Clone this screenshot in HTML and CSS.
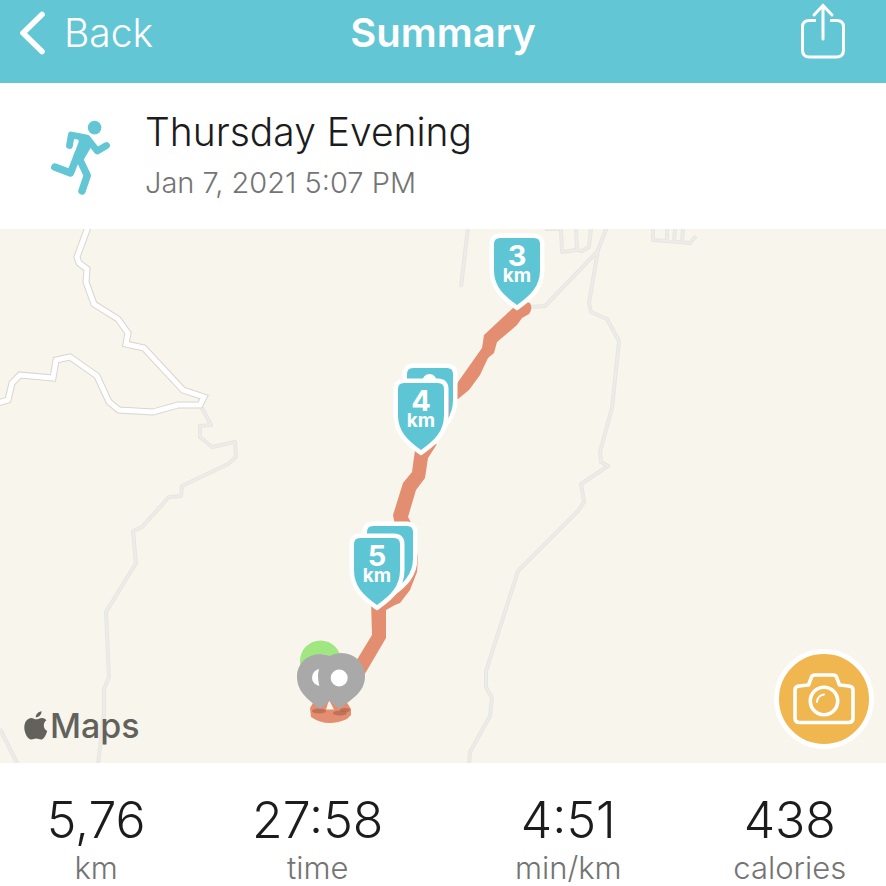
FILE: index.html
```html
<!DOCTYPE html>
<html lang="en">
<head>
<meta charset="utf-8">
<meta name="viewport" content="width=device-width, initial-scale=1">
<title>Summary</title>
<link rel="stylesheet" href="styles.css">
</head>
<body>
<header class="navbar">
  <button class="nav-button back" type="button">
    <svg width="28" height="44" viewBox="0 0 28 44" aria-hidden="true"><path d="M23 3.500 4 22 23 40.500" fill="none" stroke="currentColor" stroke-width="5.600" stroke-linecap="round" stroke-linejoin="round"/></svg>
    <span>Back</span>
  </button>
  <h1 class="nav-title">Summary</h1>
  <button class="nav-button share" type="button" aria-label="Share">
    <svg width="44" height="60" viewBox="0 0 44 60" fill="none" stroke="currentColor" stroke-width="3" aria-hidden="true"><path d="M15 17.500H8.500Q1.500 17.500 1.500 24V47Q1.500 54 8.500 54H35.500Q42.500 54 42.500 47V24Q42.500 17.500 35.500 17.500H29"/><path d="M22 36V3M13 12 22 2.500 31 12" stroke-linecap="round"/></svg>
  </button>
</header>
<main>
  <section class="activity">
    <svg class="runner" width="60" height="76" viewBox="50 119 60 76" fill="none" stroke="currentColor" stroke-width="7.400" stroke-linecap="round" stroke-linejoin="round" aria-hidden="true">
      <circle cx="94.600" cy="127.600" r="6.800" fill="currentColor" stroke="none"/>
      <path d="M69.500 145.500 71.300 135 87 138 97.200 151 106.500 145.500" stroke-width="6.800"/>
      <path d="M54.800 167 70.500 173 78 154"/>
      <path d="M79 158 87.300 175.500 82 191"/>
      <path d="M79 136 88 137.500 92 143 82 160 74 158 80 142Z" fill="currentColor" stroke-width="2.500"/>
    </svg>
    <div class="activity-text">
      <h2>Thursday Evening</h2>
      <p>Jan 7, 2021 5:07 PM</p>
    </div>
  </section>
  <section class="map" aria-label="Route map">
    <svg class="map-canvas" viewBox="0 229 886 534" aria-hidden="true">
      <defs>
        <path id="shield" d="M-17-67H17Q23-67 23-61V-35C23-19 14-10 0 0C-14-10-23-19-23-35V-61Q-23-67-17-67Z"/>
        <path id="trail-w" d="M202 408 211 425 200 426V437L212 447 235 442 236 457 228 464 182 486 181 496 169 497 142 527 133 531 136 563 106 612 109 677 104 689V713L98 765M0 729 18 765"/>
        <path id="trail-e" d="M607 227 598 250 589 303 591 312 607 319 619 341 612 408 600 452 601 462 608 466 581 484 584 502 578 511 518 571 486 671V687L492 698 490 716 470 752 469 765M597 252 545 306 530 307M468 227 461 287"/>
        <path id="streets" d="M545 229H563M561 229 562 252 577 250 582 251 589 247 591 229M576 229 577 250M653 229V240L690 243 696 236M667 229V241M675 229 674 241M683 229 682 242"/>
        <path id="road" d="M88 227 77 257 79 263 87 269 86 282 94 304 118 319 128 333 126 344 144 348 183 390 204 397 200 405H178L153 412 119 410 109 402 97 376 70 357 56 360 53 378 20 375 12 383 8 400-2 403"/>
      </defs>
      <g class="trail-edge"><use href="#trail-w"/><use href="#trail-e"/><use href="#streets"/></g>
      <g class="trail-core"><use href="#trail-w"/><use href="#trail-e"/><use href="#streets"/></g>
      <use class="road-edge" href="#road"/>
      <use class="road-core" href="#road"/>
      <g class="route">
        <path d="M513 308 484 335 482 348 458 382 448 405 458 399 469 390 480 375 488 358 494 353 497 342 517 325 522 318 529 314Q533 309 530 303L524 301Z"/>
        <path d="M415 450 412 472 403 483 393 515 396 530H415L408 517 416 490 425 478 428 458 437 444Z"/>
        <path d="M412 530 418 557 417 572 410 590 400 603 395 605 386 610V638L366 672 355 688 350 675 358 658 372 635 371 600Z"/>
        <path fill-rule="evenodd" d="M316 698H344L351 709V715L347 719Q327 728 311 717L310 708ZM329 700 326 709.500H334Z"/>
      </g>
      <ellipse class="pin-shadow" cx="319" cy="711" rx="7" ry="2.500"/>
      <ellipse class="pin-shadow" cx="340" cy="713" rx="7" ry="2.500"/>
      <ellipse class="pin-shadow" cx="345" cy="710" rx="5" ry="2"/>
      <circle class="start" cx="320.500" cy="661" r="20.500"/>
      <path d="M313 657Q321 651 330 657Z" fill="#fff"/>
      <path class="pin" d="M320 709C306 698 297 691 297 676A23 22 0 0 1 343 676C343 691 334 698 320 709Z"/>
      <circle cx="320.500" cy="677.500" r="8.500" fill="#fff"/>
      <path class="pin" d="M339 709C326 698 318 691 318 676A23.500 23 0 0 1 365 676C365 691 355 697 339 709Z"/>
      <circle cx="339.200" cy="678" r="8.500" fill="#fff"/>
      <use class="shield" href="#shield" x="517" y="305"/>
      <text class="marker-number" x="517" y="266">3</text><text class="marker-unit" x="517" y="282">km</text>
      <use class="shield" href="#shield" x="430" y="435"/>
      <path d="M450 398V415L445 424V398Z" fill="#aaa" opacity=".7"/>
      <circle cx="429.500" cy="381" r="7" fill="#fff"/>
      <use class="shield" href="#shield" x="421" y="450"/>
      <text class="marker-number" x="421" y="411">4</text><text class="marker-unit" x="421" y="427">km</text>
      <use class="shield" href="#shield" x="390" y="593"/>
      <use class="shield" href="#shield" x="377" y="605"/>
      <text class="marker-number" x="377" y="566">5</text><text class="marker-unit" x="377" y="582">km</text>
    </svg>
    <div class="attribution">
      <svg width="24" height="30" viewBox="0 0 24 30" fill="currentColor" aria-hidden="true"><path d="M12 8.300C14 8.300 15.500 6.900 18 6.900 20.200 6.900 21.600 8 22.400 9.300 18.800 11.700 18.900 18 23.200 19.900 22 23.800 19.800 28.500 17 28.500 15.200 28.500 14.400 27.500 12.300 27.500 10.200 27.500 9.200 28.500 7.500 28.500 3.800 28.500.3 22.300.3 16.500.3 10.300 3.800 6.900 7.400 6.900 9.300 6.900 10.600 8.300 12 8.300ZM11.800 6.400C11.500 3.500 14.500.6 17.500.3 17.800 3.500 15 6.400 11.800 6.400Z"/></svg>
      <span>Maps</span>
    </div>
    <button class="camera" type="button" aria-label="Add photo">
      <svg width="62" height="52" viewBox="0 0 62 52" fill="none" stroke="currentColor" stroke-width="3.600" stroke-linejoin="round" aria-hidden="true"><path d="M6 13 15.500 12 18.500 4Q19.300 2 21.500 2H40.500Q42.700 2 43.500 4L46.500 12 56 13Q60 13.500 60 17V45Q60 49.500 55.500 49.500H6.500Q2 49.500 2 45V17Q2 13.500 6 13Z"/><circle cx="31" cy="28" r="13.700"/><path d="M24 29Q24.500 22.500 31 21.500" stroke-width="2" stroke-linecap="round"/></svg>
    </button>
  </section>
  <section class="stats" aria-label="Statistics">
    <div class="stat"><strong>5,76</strong><span>km</span></div>
    <div class="stat"><strong>27:58</strong><span>time</span></div>
    <div class="stat"><strong>4:51</strong><span>min/km</span></div>
    <div class="stat"><strong>438</strong><span>calories</span></div>
  </section>
</main>
</body>
</html>
```
FILE: styles.css
```css
* { box-sizing: border-box; }
body {
  margin: 0;
  background: #fff;
  color: #1c1c1c;
  font-family: Inter, "Liberation Sans", sans-serif;
  font-weight: 300;
}
h1, h2, p { margin: 0; font-weight: inherit; }
button { padding: 0; border: 0; background: none; color: inherit; font: inherit; cursor: pointer; }
svg { display: block; }

.navbar {
  display: grid;
  grid-template-columns: 1fr auto 1fr;
  align-items: center;
  height: 83px;
  padding: 0 41px 17px 19px;
  background: #62c6d5;
  color: #fff;
}
.nav-button { display: flex; align-items: center; gap: 17px; }
.back { font-size: 39px; line-height: 44px; }
.share { justify-self: end; }
.nav-title { padding-left: 22px; font-size: 40px; line-height: 48px; font-weight: 600; }

.activity {
  display: flex;
  align-items: center;
  gap: 35px;
  height: 146px;
  padding: 2px 50px 0;
}
.runner { color: #62c6d5; }
.activity h2 { font-size: 39px; line-height: 52px; }
.activity p { color: #747474; font-size: 29px; line-height: 50px; }

.map { position: relative; background: #f8f5ec; }
.map-canvas { width: 100%; height: auto; }
.trail-edge { fill: none; stroke: #e6e5e2; stroke-width: 4; stroke-linejoin: round; }
.trail-core { fill: none; stroke: #edece9; stroke-width: 2; stroke-linejoin: round; }
.road-edge { fill: none; stroke: #d9d5cf; stroke-width: 7; }
.road-core { fill: none; stroke: #fff; stroke-width: 5; }
.route { fill: #e38e70; }
.start { fill: #a0e681; }
.pin { fill: #a9a9a9; }
.pin-shadow { fill: #a85e48; opacity: .6; }
.shield { fill: #5ec5d5; stroke: #fff; stroke-width: 9; paint-order: stroke; }
.marker-number, .marker-unit { fill: #fff; font-weight: 700; text-anchor: middle; }
.marker-number { font-size: 29px; }
.marker-unit { font-size: 19px; }

.attribution {
  position: absolute;
  left: 24px;
  bottom: 17px;
  display: flex;
  align-items: center;
  gap: 2px;
  color: #62615c;
  font-size: 34px;
  line-height: 40px;
  font-weight: 500;
}
.camera {
  position: absolute;
  right: 12px;
  bottom: 14px;
  display: grid;
  place-items: center;
  width: 100px;
  height: 100px;
  border: 5px solid #fff;
  border-radius: 50%;
  background: #f0b64f;
  color: #fff;
}

.stats {
  display: grid;
  grid-template-columns: 192fr 250fr 250fr 192fr;
  padding-top: 27px;
  text-align: center;
}
.stat { display: flex; flex-direction: column; }
.stat strong { font-size: 50px; line-height: 60px; font-weight: 300; }
.stat span { color: #747474; font-size: 31px; line-height: 36px; }
```
